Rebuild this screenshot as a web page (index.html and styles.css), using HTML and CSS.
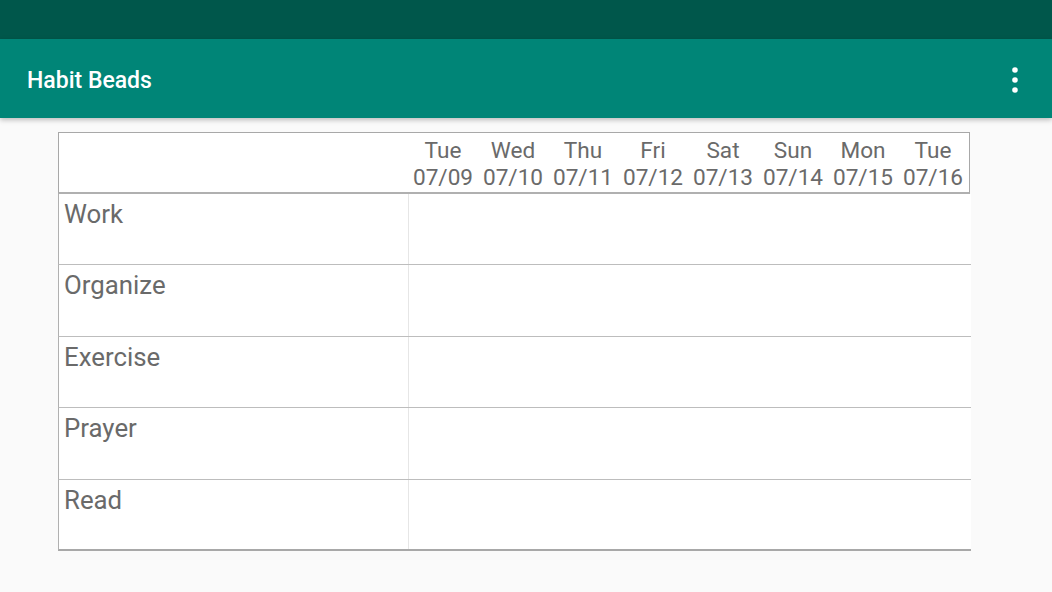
FILE: index.html
```html
<!DOCTYPE html>
<html>
<head>
<meta charset="utf-8">
<link rel="stylesheet" href="styles.css">
</head>
<body>
<div class="status"></div>
<header class="appbar">
  <div class="title">Habit Beads</div>
  <svg class="more" width="8" height="28" viewBox="0 0 8 28"><circle cx="4" cy="4" r="2.8" fill="#fff"/><circle cx="4" cy="14" r="2.8" fill="#fff"/><circle cx="4" cy="24" r="2.8" fill="#fff"/></svg>
</header>
<main class="content">
  <div class="table">
    <div class="head">
      <div class="corner"></div>
      <div class="day">Tue<br>07/09</div>
      <div class="day">Wed<br>07/10</div>
      <div class="day">Thu<br>07/11</div>
      <div class="day">Fri<br>07/12</div>
      <div class="day">Sat<br>07/13</div>
      <div class="day">Sun<br>07/14</div>
      <div class="day">Mon<br>07/15</div>
      <div class="day">Tue<br>07/16</div>
    </div>
    <div class="row"><div class="label">Work</div><div class="cells"></div></div>
    <div class="row"><div class="label">Organize</div><div class="cells"></div></div>
    <div class="row"><div class="label">Exercise</div><div class="cells"></div></div>
    <div class="row"><div class="label">Prayer</div><div class="cells"></div></div>
    <div class="row last"><div class="label">Read</div><div class="cells"></div></div>
  </div>
</main>
</body>
</html>
```
FILE: styles.css
```css
* { box-sizing: border-box; }
html, body { margin: 0; padding: 0; }
body {
  width: 1052px;
  height: 592px;
  background: #fafafa;
  font-family: Roboto, "Noto Sans", sans-serif;
  overflow: hidden;
}
.status { height: 39px; background: #00574b; }
.appbar {
  height: 79px;
  background: #008577;
  display: flex;
  align-items: center;
  justify-content: space-between;
  padding: 0 33px 0 27px;
  box-shadow: 0 2px 5px rgba(0,0,0,0.25);
  position: relative;
  z-index: 1;
}
.title {
  color: #fff;
  font-size: 23px;
  font-weight: 500;
  margin-top: 4px;
}
.more { display: block; margin-top: 2px; }
.content { padding: 14px 0 0 58px; }
.table { width: 913px; }
.head {
  width: 912px;
  display: grid;
  grid-template-columns: 349px repeat(8, 70px);
  border: 1px solid #a8a8a8;
  border-bottom-width: 2px;
  border-bottom-color: #b0b0b0;
  background: #fff;
  height: 62px;
  padding-top: 4px;
}
.day {
  text-align: center;
  color: #6a6a6a;
  font-size: 22.6px;
  line-height: 27px;
  white-space: nowrap;
}
.row {
  display: flex;
  height: 71.4px;
  background: #fff;
  border-left: 1px solid #b0b0b0;
  border-bottom: 1px solid #bdbdbd;
}
.row.last { border-bottom: 2px solid #a8a8a8; }
.label {
  width: 350px;
  border-right: 1px solid #e6e6e6;
  color: #6a6a6a;
  font-size: 25.8px;
  line-height: 30px;
  padding: 5px 0 0 5px;
}
.cells { flex: 1; }
```
